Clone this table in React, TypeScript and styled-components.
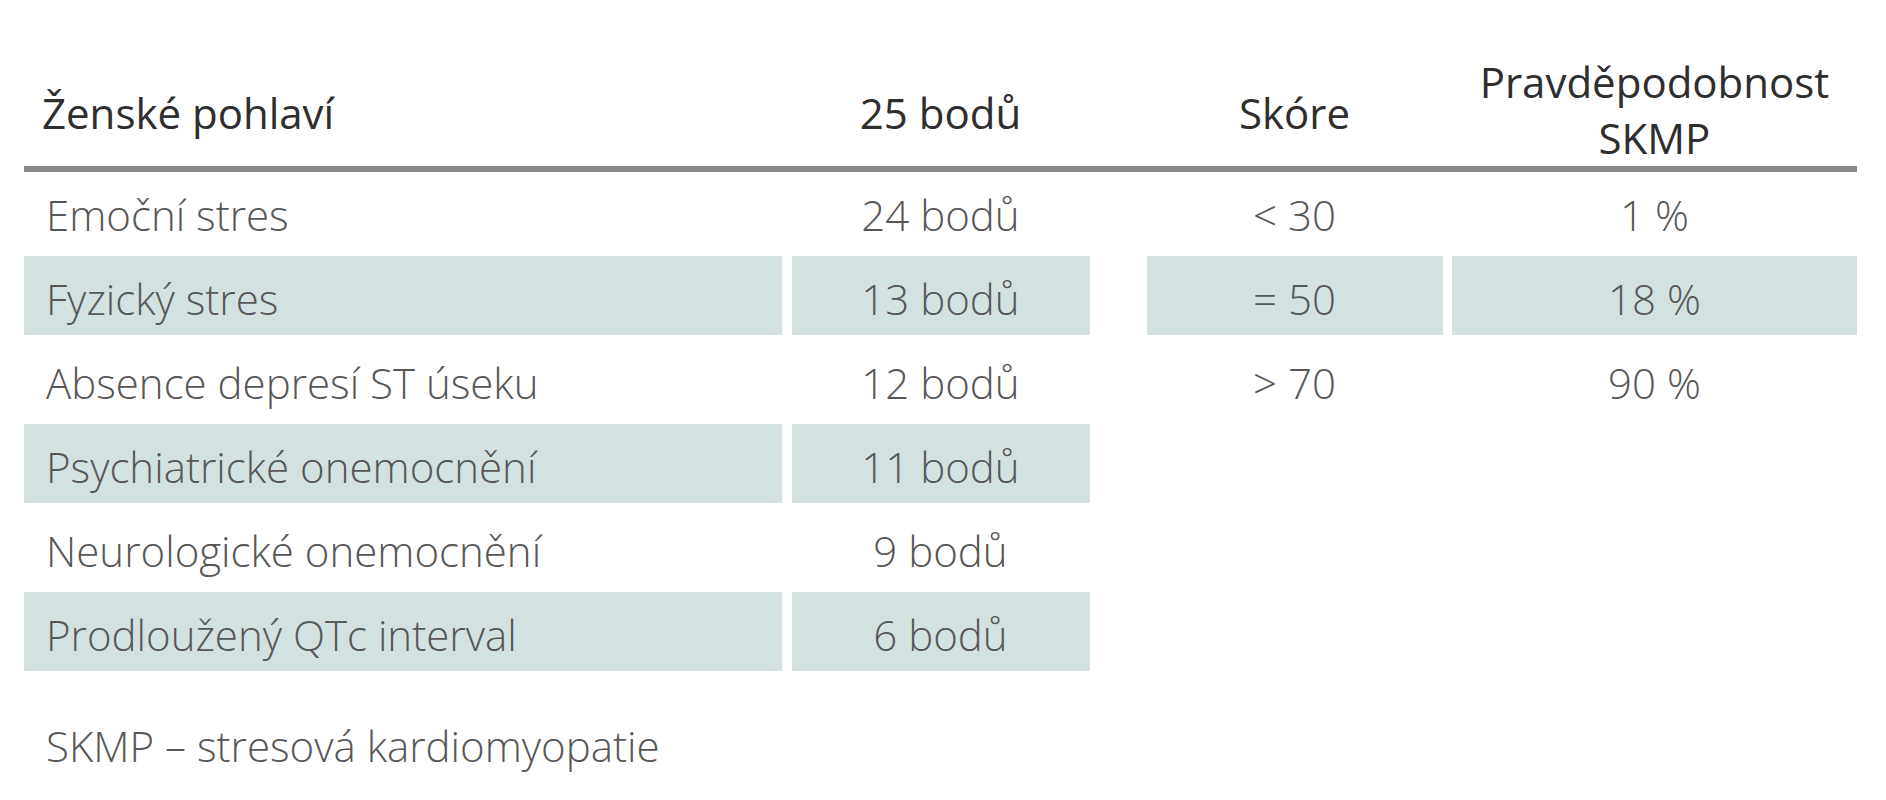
import * as React from "react";
import styled, { createGlobalStyle } from "styled-components";

const GlobalStyle = createGlobalStyle`
  html, body {
    margin: 0;
    padding: 0;
    background: #fff;
  }
  body {
    font-family: "Open Sans", "Liberation Sans", sans-serif;
  }
`;

const columns = "758px 298px 38px 296px 405px";

const Page = styled.div`
  padding: 54px 0 0 24px;
  width: 1833px;
`;

const HeaderRow = styled.div`
  display: grid;
  grid-template-columns: ${columns};
  column-gap: 9.5px;
  height: 112px;
`;

const HeaderCell = styled.div<{ $align?: "left" | "center" }>`
  display: flex;
  align-items: center;
  justify-content: ${p => (p.$align === "left" ? "flex-start" : "center")};
  padding: ${p => (p.$align === "left" ? "5px 0 0 18px" : "5px 0 0 0")};
  font-size: 42px;
  font-weight: 500;
  line-height: 56px;
  color: #2e2e2e;
  text-align: center;
`;

const TwoLineHeader = styled(HeaderCell)`
  padding: 0;
`;

const Divider = styled.div`
  height: 6px;
  background: #8b8b8b;
`;

const Body = styled.div`
  display: flex;
  flex-direction: column;
  gap: 5px;
`;

const Row = styled.div`
  display: grid;
  grid-template-columns: ${columns};
  column-gap: 9.5px;
  height: 79px;
`;

const Cell = styled.div<{ $shaded?: boolean; $align?: "left" | "center" }>`
  display: flex;
  align-items: center;
  justify-content: ${p => (p.$align === "left" ? "flex-start" : "center")};
  padding: ${p => (p.$align === "left" ? "6px 0 0 22px" : "6px 0 0 0")};
  background: ${p => (p.$shaded ? "#d3e2e1" : "transparent")};
  font-size: 42px;
  font-weight: 300;
  color: #575757;
  white-space: nowrap;
`;

const Note = styled.div`
  margin-top: 46px;
  padding-left: 22px;
  font-size: 42px;
  font-weight: 300;
  color: #575757;
`;

const factors = [
  { name: "Emoční stres", points: "24 bodů" },
  { name: "Fyzický stres", points: "13 bodů" },
  { name: "Absence depresí ST úseku", points: "12 bodů" },
  { name: "Psychiatrické onemocnění", points: "11 bodů" },
  { name: "Neurologické onemocnění", points: "9 bodů" },
  { name: "Prodloužený QTc interval", points: "6 bodů" },
];

const scores = [
  { score: "< 30", chance: "1 %" },
  { score: "= 50", chance: "18 %" },
  { score: "> 70", chance: "90 %" },
];

const App = () => (
  <>
    <GlobalStyle />
    <Page>
      <HeaderRow>
        <HeaderCell $align="left">Ženské pohlaví</HeaderCell>
        <HeaderCell>25 bodů</HeaderCell>
        <div />
        <HeaderCell>Skóre</HeaderCell>
        <TwoLineHeader>
          Pravděpodobnost
          <br />
          SKMP
        </TwoLineHeader>
      </HeaderRow>
      <Divider />
      <Body>
        {factors.map((f, i) => {
          const shaded = i % 2 === 1;
          const s = scores[i];
          return (
            <Row key={f.name}>
              <Cell $align="left" $shaded={shaded}>
                {f.name}
              </Cell>
              <Cell $shaded={shaded}>{f.points}</Cell>
              <div />
              <Cell $shaded={shaded && !!s}>{s ? s.score : ""}</Cell>
              <Cell $shaded={shaded && !!s}>{s ? s.chance : ""}</Cell>
            </Row>
          );
        })}
      </Body>
      <Note>SKMP – stresová kardiomyopatie</Note>
    </Page>
  </>
);

export default App;
